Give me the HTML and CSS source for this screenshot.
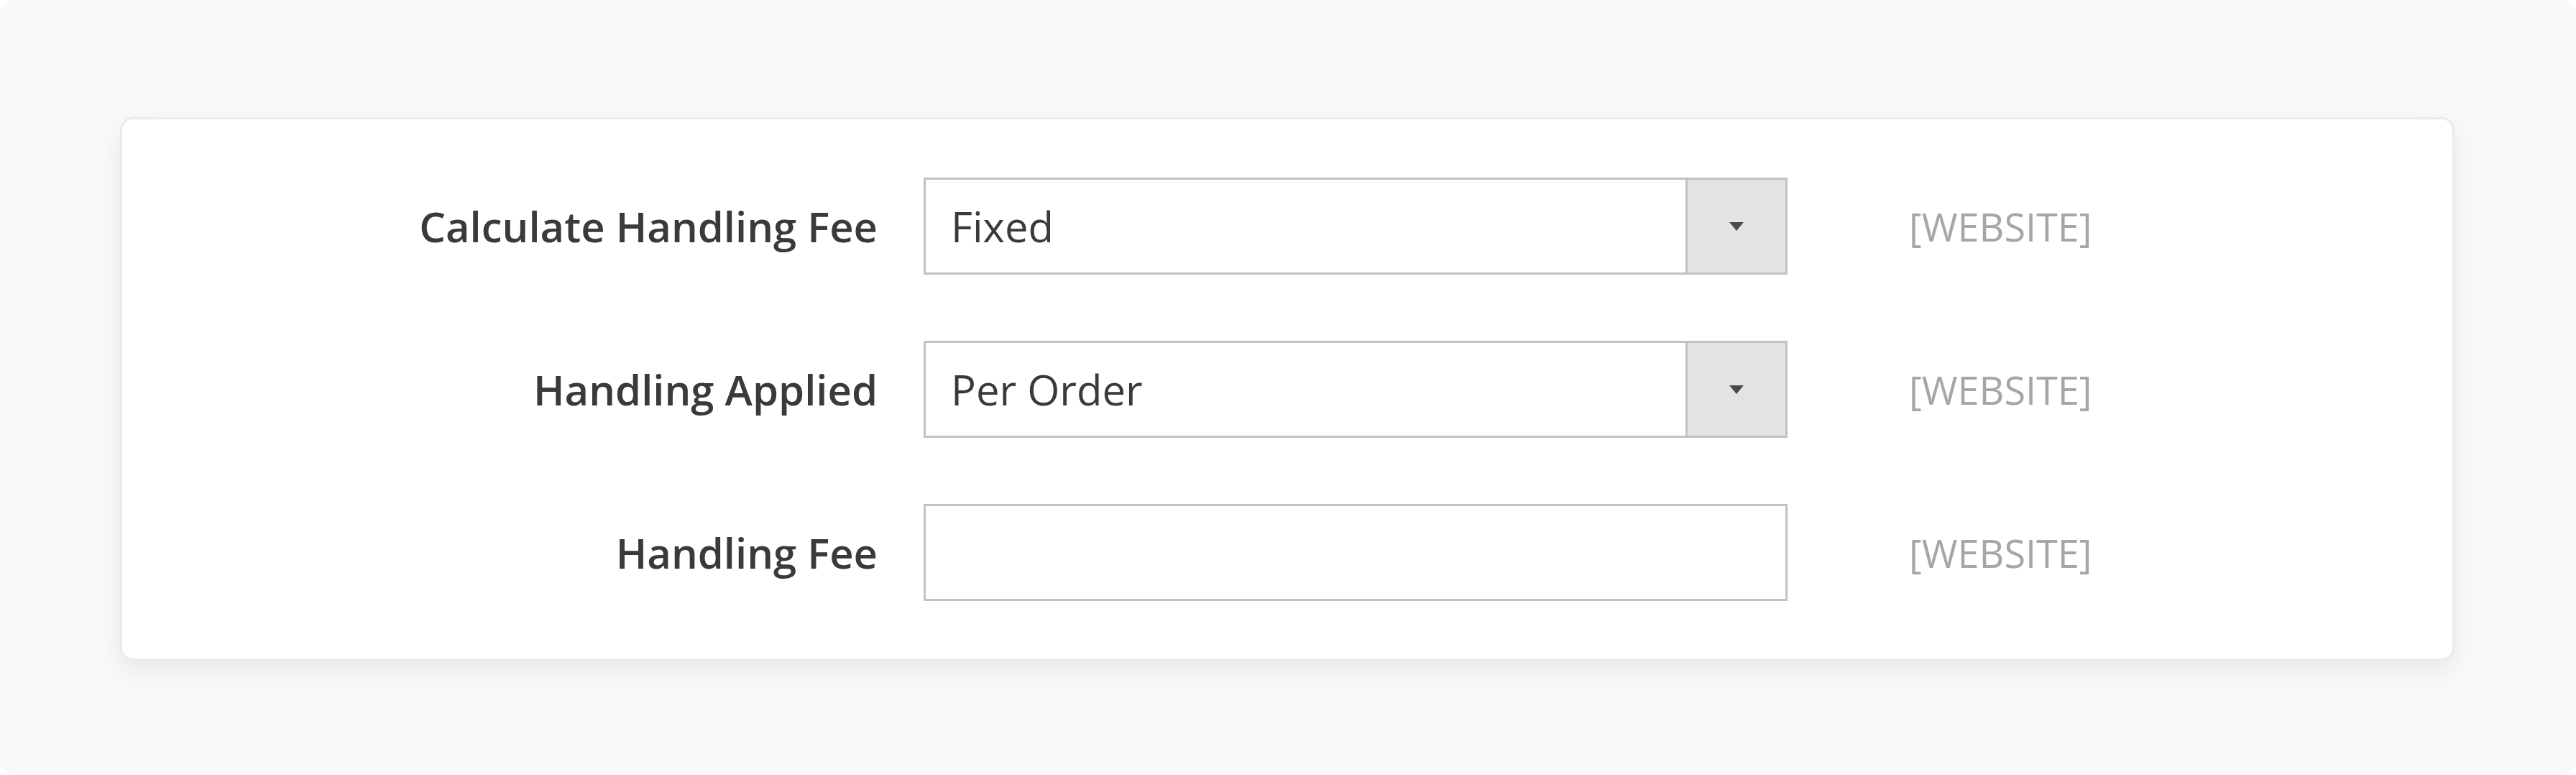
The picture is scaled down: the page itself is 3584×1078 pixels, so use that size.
FILE: index.html
```html
<!DOCTYPE html>
<html lang="en">
<head>
    <meta charset="UTF-8">
    <title>Handling Fee Settings</title>
    <link rel="stylesheet" href="styles.css">
</head>
<body>

<div class="page">
    <div class="card">
        <form class="fields">
            <label class="field-label" for="handlingType">Calculate Handling Fee</label>
            <div class="select-wrap">
                <select id="handlingType" class="control">
                    <option>Fixed</option>
                    <option>Percent</option>
                </select>
                <span class="select-btn">
                    <svg width="20" height="12" viewBox="0 0 20 12"><path d="M0 0h20L10 12z" fill="#4a4a4a"/></svg>
                </span>
            </div>
            <span class="scope">[WEBSITE]</span>

            <label class="field-label" for="handlingAction">Handling Applied</label>
            <div class="select-wrap">
                <select id="handlingAction" class="control">
                    <option>Per Order</option>
                    <option>Per Package</option>
                </select>
                <span class="select-btn">
                    <svg width="20" height="12" viewBox="0 0 20 12"><path d="M0 0h20L10 12z" fill="#4a4a4a"/></svg>
                </span>
            </div>
            <span class="scope">[WEBSITE]</span>

            <label class="field-label" for="handlingFee">Handling Fee</label>
            <div class="input-wrap">
                <input id="handlingFee" class="control" type="text">
            </div>
            <span class="scope">[WEBSITE]</span>
        </form>
    </div>
</div>

</body>
</html>
```

FILE: styles.css
```css
html, body {
    margin: 0;
    background: #fff;
}
body {
    font-family: "Open Sans", "Liberation Sans", sans-serif;
    color: #303030;
}
.page {
    height: 1078px;
    background: #f9f9f9;
    border-radius: 20px;
    padding: 163px 169px 0 167px;
    box-sizing: border-box;
}
.card {
    background: #fff;
    border: 3px solid #ebebeb;
    border-radius: 18px;
    box-shadow: 0 14px 34px rgba(0, 0, 0, 0.07);
    padding: 81px 0 80px;
}
.fields {
    display: grid;
    grid-template-columns: 1051px 1202px auto;
    column-gap: 64px;
    row-gap: 92px;
    align-items: center;
    margin: 0;
}
.fields .scope {
    margin-left: 105px;
}
.field-label {
    text-align: right;
    font-size: 58px;
    font-weight: 600;
    color: #3a3a3a;
}
.select-wrap, .input-wrap {
    display: flex;
    height: 135px;
    box-sizing: border-box;
    border: 3px solid #c2c2c2;
    background: #fff;
}
.control {
    flex: 1;
    min-width: 0;
    border: none;
    outline: none;
    background: transparent;
    font-family: inherit;
    font-size: 58px;
    color: #3a3a3a;
    padding: 0 0 0 35px;
    margin: 0;
    appearance: none;
    -webkit-appearance: none;
}
.select-btn {
    width: 136px;
    border-left: 3px solid #c2c2c2;
    background: #e3e3e3;
    display: flex;
    align-items: center;
    justify-content: center;
}
.scope {
    font-size: 54px;
    color: #a6a6a6;
}
```
